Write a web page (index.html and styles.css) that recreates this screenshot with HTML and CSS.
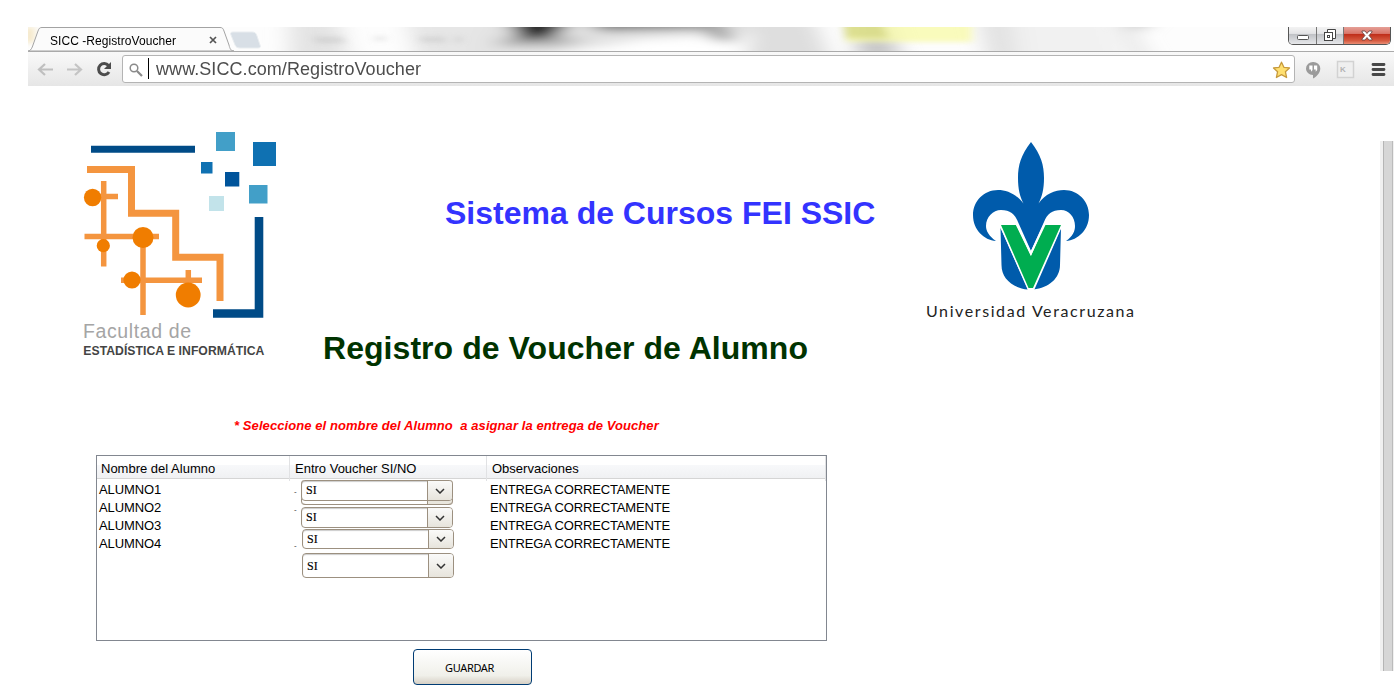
FILE: index.html
```html
<!DOCTYPE html>
<html lang="es">
<head>
<meta charset="utf-8">
<title>SICC -RegistroVoucher</title>
<link rel="stylesheet" href="styles.css">
</head>
<body>
<div class="browser">
  <div class="tabstrip">
    <svg class="glass" width="1366" height="24" viewBox="28 27 1366 24">
      <defs>
        <filter id="soft" filterUnits="userSpaceOnUse" x="0" y="-20" width="1420" height="130"><feGaussianBlur stdDeviation="11 4"/></filter>
        <filter id="fine" filterUnits="userSpaceOnUse" x="0" y="-20" width="1420" height="130"><feGaussianBlur stdDeviation="4 2.500"/></filter>
      </defs>
      <rect x="28" y="27" width="1366" height="24" fill="#fdfdfd"/>
      <g filter="url(#soft)">
        <path d="M288 5H335L352 70H290Z" fill="#e4e4e4"/>
        <path d="M402 5H520L500 70H420Z" fill="#e6e6e6"/>
        <path d="M490 5H750L755 33 640 40 540 56H470Z" fill="#e3e3e3"/>
        <path d="M500 38H590L560 46 500 46Z" fill="#aaa"/>
        <path d="M500 5H585L555 37 520 40Z" fill="#262626"/>
        <path d="M570 5H722V28L600 31Z" fill="#777"/>
        <path d="M690 5H714L735 42 715 42Z" fill="#999"/>
        <path d="M640 40H720L740 60H620Z" fill="#fff"/>
        <path d="M755 5H808L835 70H745Z" fill="#dedede"/>
        <path d="M852 5H880L905 70H860Z" fill="#c8c8c8"/>
        <path d="M974 5H1010L1030 70H990Z" fill="#e2e2e2"/>
        <path d="M1010 5H1100L1130 70H1020Z" fill="#f1f1f1"/>
        <path d="M1110 5H1165L1140 32Z" fill="#bbb"/>
        <path d="M1120 20L1150 70" stroke="#e2e2e2" stroke-width="12"/>
      </g>
      <g filter="url(#fine)">
        <path d="M842 10H972V42H846Z" fill="#f7faa6" opacity=".75"/>
        <path d="M842 10H876L888 38H846Z" fill="#cdd078" opacity=".6"/>
        <path d="M312 37H342L346 43H318ZM418 37H444L447 42H422ZM455 37H462V42H455ZM374 37H386V40H374Z" fill="#bbb" opacity=".45"/>
        <rect x="26" y="27" width="7" height="16" fill="#f2dfb0"/>
      </g>
      <path d="M28 51 L29 51 C31 50 32 48 33 45 L38 31 C39 28 40 27.500 42 27.500 H220 C222 27.500 223 28 224 31 L229 45 C230 49 231 51 234 51 Z" fill="#fbfbfb" stroke="#a3a3a3"/>
      <path d="M233 32H252C255 32 256 33 257 36L260 45C261 47 260 48 258 48H240C237 48 236 47 235 45L231 35C230 33 231 32 233 32Z" fill="#d8dfe6" stroke="#e9edf0"/>
    </svg>
    <div class="tab-row">
      <span class="tab-title">SICC -RegistroVoucher</span>
      <svg class="tab-close" width="8" height="8" viewBox="0 0 8 8"><path d="M1 1L7 7M7 1L1 7" stroke="#555" stroke-width="1.700"/></svg>
      <div class="win-controls">
        <span class="win min"><svg width="12" height="6"><rect x=".5" y=".5" width="11" height="4" rx="1" fill="#fff" stroke="#555"/></svg></span>
        <span class="win max"><svg width="12" height="13" viewBox="0 0 12 13"><path d="M3.500 3.500V.5H11.500V9.500H8.500" fill="#fff" stroke="#444"/><rect x=".5" y="3.500" width="8" height="8" fill="#fff" stroke="#444"/><rect x="3.500" y="6.500" width="2" height="2" fill="none" stroke="#444"/></svg></span>
        <span class="win close"><svg width="12" height="11" viewBox="0 0 12 11"><path d="M1 1H4L6 3.500 8 1H11V2L8 5.500 11 9V10H8L6 7.500 4 10H1V9L4 5.500 1 2Z" fill="#fff" stroke="#63403e" stroke-width=".8"/></svg></span>
      </div>
    </div>
  </div>
  <div class="toolbar">
    <svg class="nav" width="94" height="34" viewBox="28 52 94 34">
      <path d="M53 69.500H39M45 64L39 69.500 45 75" fill="none" stroke="#bfbfbf" stroke-width="2.200"/>
      <path d="M67 69.500H81M75 64L81 69.500 75 75" fill="none" stroke="#c4c4c4" stroke-width="2.200"/>
      <path d="M108.500 65.500A5.600 5.600 0 1 0 109 72" fill="none" stroke="#4c4c4c" stroke-width="3"/>
      <path d="M111 62V69H104Z" fill="#4c4c4c"/>
    </svg>
    <div class="omnibox">
      <svg class="lens" width="14" height="14" viewBox="0 0 14 14"><circle cx="5" cy="5" r="3.800" fill="none" stroke="#8a8a8a" stroke-width="1.500"/><path d="M8 8L13 13" stroke="#8a8a8a" stroke-width="2.200"/></svg>
      <span class="caret"></span>
      <span class="url">www.SICC.com/RegistroVoucher</span>
      <svg class="star" width="19" height="18" viewBox="0 0 19 18"><path d="M9.500 1.200L11.900 6.300 17.500 6.900 13.400 10.700 14.600 16.500 9.500 13.600 4.400 16.500 5.600 10.700 1.500 6.900 7.100 6.300Z" fill="#ffe071" stroke="#c79a3c" stroke-width="1.300" stroke-linejoin="round"/></svg>
    </div>
    <svg class="extras" width="99" height="34" viewBox="1295 52 99 34">
      <path d="M1313.200 62A7 6.700 0 0 0 1306 68.500C1306 72 1309 75 1313 75V78.500C1317 76.500 1320.300 72.500 1320.300 68.500A7 6.700 0 0 0 1313.200 62Z" fill="#9b9b9b"/>
      <path d="M1309.300 65.500H1312.500V70L1311 71.700V69.500H1309.300ZM1314 65.500H1317.200V70L1315.700 71.700V69.500H1314Z" fill="#fff"/>
      <rect x="1337.500" y="61.500" width="16" height="16" fill="#efefef" stroke="#d2d2d2" stroke-width="1.500"/>
      <text x="1340" y="71.500" class="ext-key">K</text>
      <path d="M1373 64.500H1384M1373 69.500H1384M1373 74.500H1384" stroke="#484848" stroke-width="2.800" stroke-linecap="round"/>
    </svg>
  </div>
</div>

<div class="viewport">
  <main class="page">
    <header class="banner">
      <svg class="fei-logo" width="210" height="240" viewBox="80 126 210 240">
        <path d="M91 149.300H195" stroke="#004b87" stroke-width="7"/>
        <path d="M213 313.500H259V217" fill="none" stroke="#004b87" stroke-width="8.600"/>
        <g fill="none" stroke="#f4953f">
          <path d="M87 169.500H131.500V213.200H175.700V257.300H220V301" stroke-width="7"/>
          <path d="M103.700 181V266.500M92 196.500H118M84.500 236.500H159M143 238V315M121 280.200H202M188.300 270V290" stroke-width="5.500"/>
        </g>
        <g fill="#f07d00"><circle cx="92.600" cy="197.500" r="8.700"/><circle cx="143" cy="237.500" r="10.500"/><circle cx="103.300" cy="245.700" r="6.600"/><circle cx="132" cy="280" r="8.600"/><circle cx="188.200" cy="295" r="12.400"/></g>
        <rect x="216" y="132" width="19" height="19" fill="#429fc8"/>
        <rect x="253" y="142" width="23" height="24" fill="#0f71b2"/>
        <rect x="201" y="162" width="11.500" height="11.500" fill="#0f71b2"/>
        <rect x="225" y="172" width="14.300" height="14.500" fill="#00549b"/>
        <rect x="249" y="185" width="18.500" height="18.500" fill="#429fc8"/>
        <rect x="209" y="196" width="15" height="15" fill="#c2e3ea"/>
        <text x="83" y="338.300" class="fei-small" textLength="108">Facultad de</text>
        <text x="83.300" y="354.800" class="fei-bold" textLength="181">ESTADÍSTICA E INFORMÁTICA</text>
      </svg>
      <div class="titles">
        <h1 class="system">Sistema de Cursos FEI SSIC</h1>
        <h2 class="screen">Registro de Voucher de Alumno</h2>
      </div>
      <svg class="uv-logo" width="230" height="200" viewBox="915 130 230 200">
        <path d="M1031 142C1021 155 1018 165 1018 178C1018 189 1020 197 1023.500 203.500C1016 194 1007 190 998 190C984 190 973 201 973 215C973 230 984 240 996 241C989 236 986 231 986 226C986 217 993 210 1001 210C1010 210 1015 214 1018 222L1031 251L1044 222C1047 214 1052 210 1061 210C1069 210 1075 217 1075 226C1075 231 1073 236 1066 241C1078 240 1089 230 1089 215C1089 201 1078 190 1064 190C1055 190 1045 194 1038.500 203.500C1042 197 1044 189 1044 178C1044 165 1041 155 1031 142Z" fill="#005bab"/>
        <path d="M1000.500 228L1028 289.500C1012 288 1001.500 278 1001.500 265ZM1061 228L1033.500 289.500C1049 288 1060 278 1060 265Z" fill="#005bab"/>
        <path d="M1001 225L1029 289H1033L1061 225" fill="none" stroke="#fff" stroke-width="3"/>
        <path d="M1001 225H1016.500L1031 256 1044.500 225H1061L1033 288H1028.500Z" fill="#00ad50"/>
        <path d="M1016.500 224L1030.800 253.500 1044.800 224" fill="none" stroke="#fff" stroke-width="2"/>
        <text x="926" y="317" class="uv-name" textLength="208">Universidad&#160;Veracruzana</text>
      </svg>
    </header>

    <p class="hint">* Seleccione el nombre del Alumno&nbsp; a asignar la entrega de Voucher</p>

    <section class="table">
      <div class="thead"><span>Nombre del Alumno</span><span>Entro Voucher SI/NO</span><span>Observaciones</span></div>
      <div class="tbody">
        <div class="names"><span>ALUMNO1</span><span>ALUMNO2</span><span>ALUMNO3</span><span>ALUMNO4</span></div>
        <div class="ticks"><span>-</span><span>-</span><span></span><span>-</span></div>
        <div class="combos">
          <div class="combo-back"><div class="combo c1"><span>SI</span><i><svg width="10" height="6"><path d="M1 1L5 5 9 1" /></svg></i></div></div>
          <div class="combo c2"><span>SI</span><i><svg width="10" height="6"><path d="M1 1L5 5 9 1" /></svg></i></div>
          <div class="combo c3"><span>SI</span><i><svg width="10" height="6"><path d="M1 1L5 5 9 1" /></svg></i></div>
          <div class="combo c4"><span>SI</span><i><svg width="10" height="6"><path d="M1 1L5 5 9 1" /></svg></i></div>
        </div>
        <div class="notes"><span>ENTREGA CORRECTAMENTE</span><span>ENTREGA CORRECTAMENTE</span><span>ENTREGA CORRECTAMENTE</span><span>ENTREGA CORRECTAMENTE</span></div>
      </div>
    </section>
    <button class="save">GUARDAR</button>
  </main>
  <div class="scrollbar"></div>
</div>
</body>
</html>
```

FILE: styles.css
```css
* { box-sizing: border-box; }
body { margin: 0; height: 700px; overflow: hidden; background: #fff; font-family: "Liberation Sans", Arial, sans-serif; color: #000; }
svg { display: block; }

.browser { margin: 27px 0 0 28px; width: 1366px; height: 59px; }
.tabstrip { display: grid; height: 24px; }
.glass, .tab-row { grid-area: 1 / 1; }
.tab-row { z-index: 1; display: flex; align-items: flex-start; padding-left: 22px; }
.tab-title { width: 159px; font-size: 12px; line-height: 14px; padding-top: 7px; white-space: nowrap; letter-spacing: .06px; }
.tab-close { margin-top: 9px; }
.win-controls { display: flex; margin-left: auto; margin-right: 3px; width: 103px; height: 18px; border: 1px solid #555; border-top: 0; border-radius: 0 0 5px 5px; overflow: hidden; }
.win { display: flex; justify-content: center; width: 28px; background: linear-gradient(#f3f3f3, #e4e4e6 38%, #bfc1c5 42%, #e6e7ea); border-right: 1px solid #777; }
.win.min { padding-top: 8px; }
.win.max { width: 27px; padding-top: 2px; }
.win.close { width: 46px; border: 0; padding-top: 3px; background: linear-gradient(#e5a097, #d9766a 38%, #c02f1b 44%, #d65a40 80%, #e98d74); }

.toolbar { display: flex; height: 35px; border-top: 1px solid #aaa; background: linear-gradient(#f9f9f9, #e6e6e6); }
.omnibox { display: flex; flex: none; width: 1173px; height: 28px; margin-top: 3px; padding-left: 6px; border: 1px solid #b4b4b4; border-radius: 3px; background: #fff; }
.lens { margin-top: 7px; }
.caret { width: 1px; height: 21px; margin: 2px 7px 0 5px; background: #000; }
.url { font-size: 18px; line-height: 26px; letter-spacing: .07px; color: #4d4d4d; white-space: nowrap; }
.star { margin: 5px 3px 0 auto; }
.ext-key { font: bold 8px "Liberation Sans", sans-serif; fill: #b3b3b3; }

.viewport { display: flex; justify-content: space-between; height: 614px; margin: 0 6px 0 29px; }
.page { display: flex; flex-direction: column; width: 1150px; padding-top: 40px; }
.banner { display: flex; height: 244px; padding-left: 51px; }
.fei-small { font: 19.500px "Liberation Sans", sans-serif; fill: #a5a5a5; }
.fei-bold { font: bold 12.200px "Liberation Sans", sans-serif; fill: #444; }
.titles { width: 625px; padding-left: 33px; }
.titles h1, .titles h2 { margin: 0; font-size: 32px; line-height: 40px; white-space: nowrap; }
.system { padding: 67px 0 0 122px; color: #33f; }
.screen { padding-top: 95px; color: #030; letter-spacing: .05px; }
.uv-logo { margin-top: 4px; }
.uv-name { font: 16px Lato, sans-serif; fill: #222; }

.hint { margin: 47px 0 0 205px; font-size: 13px; line-height: 18px; letter-spacing: .08px; font-weight: bold; font-style: italic; color: #f00; white-space: nowrap; }
.table { width: 731px; height: 186px; margin: 20px 0 0 67px; border: 1px solid #828790; background: #fff; }
.thead { display: grid; grid-template-columns: 193px 197px 1fr; height: 23px; border-bottom: 1px solid #d5d5d5; background: linear-gradient(#fff 40%, #f7f8fa 42%, #f0f1f3); font-size: 13px; line-height: 25px; }
.thead span { padding-left: 4px; border-right: 1px solid #e1e2e4; letter-spacing: 0; white-space: nowrap; }
.thead span + span { padding-left: 5px; }
.tbody { display: grid; grid-template-columns: 194px 8px 190px 1fr; font-size: 13px; line-height: 18px; padding: 2px 0 0 2px; }
.names, .notes, .ticks { display: flex; flex-direction: column; }
.names span, .notes span, .ticks span { height: 18px; white-space: nowrap; }
.ticks { font-size: 8px; padding: 2px 0 0 1px; color: #333; }
.names span { letter-spacing: -.1px; }
.notes { margin-left: -1px; }
.notes span { letter-spacing: -.15px; }
.combo { display: flex; width: 152px; border: 1px solid #9c9080; border-radius: 4px; background: #fff; overflow: hidden; box-shadow: inset 0 1px 1px #ccc; }
.combo span { flex: 1; padding-left: 4px; font: 12px/18px "Liberation Serif", serif; -webkit-text-stroke: .15px #000; }
.combo i { display: flex; align-items: center; justify-content: center; width: 25px; border-left: 1px solid #9c9080; background: linear-gradient(#fafaf9, #e7e4dc); }
.combo path { fill: none; stroke: #333; stroke-width: 1.500; }
.combo-back { width: 152px; height: 25px; margin-top: -1px; border-bottom: 1px solid #9c9080; border-radius: 4px; background: linear-gradient(90deg, #fff 126px, #9c9080 126px 127px, #e9e6dd 127px); box-shadow: inset 1px 0 #9c9080, inset -1px 0 #9c9080; }
.c1 { height: 21px; }
.c2 { height: 21px; margin-top: 2px; }
.c3 { height: 20px; margin: 1px 0 0 1px; }
.c4 { height: 25px; margin: 4px 0 0 1px; }
.c4 span { line-height: 24px; }
.save { width: 119px; height: 36px; margin: 8px 0 0 384px; padding: 1px 6px 0 0; border: 1px solid #003c74; border-radius: 4px; background: linear-gradient(#fff, #f0f0ea 75%, #d6d0c5); font: 11px "Noto Sans", sans-serif; letter-spacing: -.35px; color: #000; }
.scrollbar { width: 14px; height: 530px; margin-top: 55px; border-left: 3px solid #f0f0f0; background: linear-gradient(90deg, #b5b5b5 1px, #d6d6d6 1px 9px, #bbb 9px 10px, #f0f0f0 10px); }
```
